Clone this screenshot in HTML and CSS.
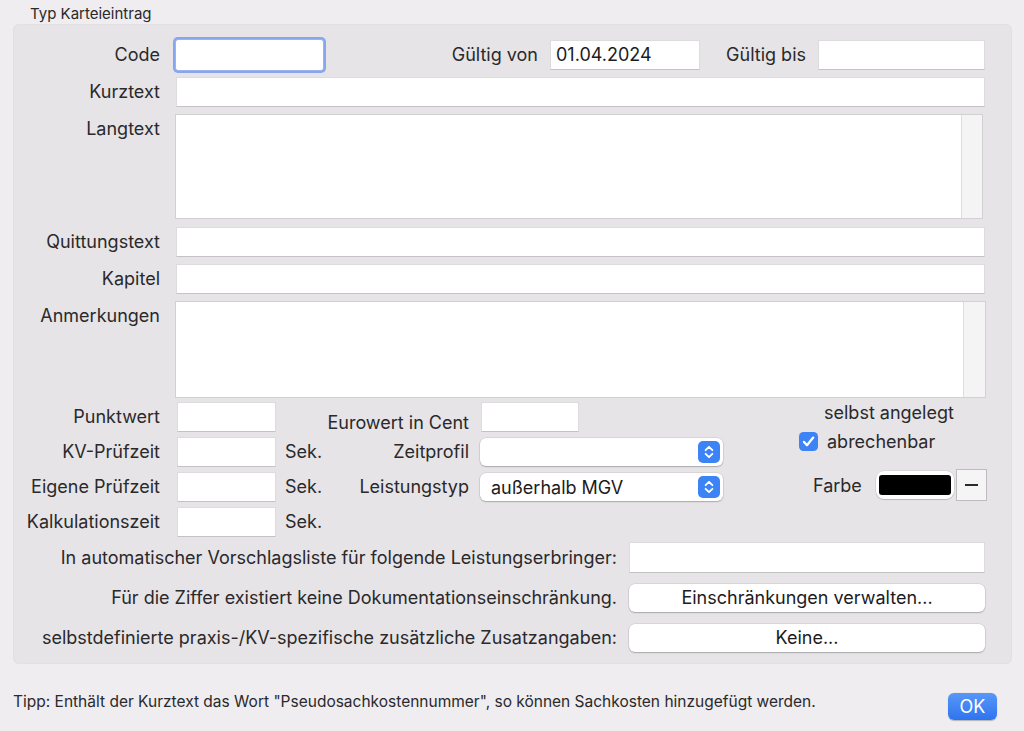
FILE: index.html
```html
<!DOCTYPE html>
<html lang="de">
<head>
<meta charset="utf-8">
<title>Typ Karteieintrag</title>
<link rel="stylesheet" href="styles.css">
</head>
<body>
<div class="window">
  <div class="group-title">Typ Karteieintrag</div>
  <div class="group">
    <div class="row">
      <span class="lbl lbl-main">Code</span>
      <div class="field field-code"></div>
      <span class="lbl lbl-von">Gültig von</span>
      <div class="field field-von">01.04.2024</div>
      <span class="lbl lbl-bis">Gültig bis</span>
      <div class="field grow"></div>
    </div>
    <div class="row">
      <span class="lbl lbl-main">Kurztext</span>
      <div class="field grow"></div>
    </div>
    <div class="row row-lang">
      <span class="lbl lbl-main">Langtext</span>
      <div class="textarea textarea-lang"><div class="ta-body"></div><div class="ta-scroll"></div></div>
    </div>
    <div class="row">
      <span class="lbl lbl-main">Quittungstext</span>
      <div class="field grow"></div>
    </div>
    <div class="row">
      <span class="lbl lbl-main">Kapitel</span>
      <div class="field grow"></div>
    </div>
    <div class="row row-anm">
      <span class="lbl lbl-main">Anmerkungen</span>
      <div class="textarea textarea-anm"><div class="ta-body"></div><div class="ta-scroll"></div></div>
    </div>

    <div class="mid">
      <span class="lbl lbl-main">Punktwert</span>
      <div class="cell"><div class="field field-small"></div></div>
      <span class="lbl lbl-mid lbl-euro">Eurowert in Cent</span>
      <div class="cell"><div class="field field-euro"></div></div>

      <div class="side">
        <div class="selbst">selbst angelegt</div>
        <div class="check-row">
          <svg class="checkbox" viewBox="0 0 19 19" width="19" height="19"><rect width="19" height="19" rx="4.5" fill="#3c83f5"/><path d="M5 9.9l3 3.3 6.2-7.6" stroke="#fff" stroke-width="2.3" fill="none" stroke-linecap="round" stroke-linejoin="round"/></svg>
          <span class="check-label">abrechenbar</span>
        </div>
        <div class="farbe-row">
          <span class="farbe-label">Farbe</span>
          <div class="well"><div class="well-color"></div></div>
          <div class="minus-btn"><span class="minus-line"></span></div>
        </div>
      </div>

      <span class="lbl lbl-main">KV-Prüfzeit</span>
      <div class="cell"><div class="field field-small"></div><span class="unit">Sek.</span></div>
      <span class="lbl lbl-mid">Zeitprofil</span>
      <div class="cell">
        <div class="popup"><span class="popup-text"></span>
          <svg class="stepper" viewBox="0 0 22 22" width="22" height="22"><rect width="22" height="22" rx="5" fill="#3c83f5"/><path d="M7.6 9.2l3.4-3.4 3.4 3.4M7.6 12.8l3.4 3.4 3.4-3.4" stroke="#fff" stroke-width="1.8" fill="none" stroke-linecap="round" stroke-linejoin="round"/></svg>
        </div>
      </div>

      <span class="lbl lbl-main">Eigene Prüfzeit</span>
      <div class="cell"><div class="field field-small"></div><span class="unit">Sek.</span></div>
      <span class="lbl lbl-mid">Leistungstyp</span>
      <div class="cell">
        <div class="popup"><span class="popup-text">außerhalb MGV</span>
          <svg class="stepper" viewBox="0 0 22 22" width="22" height="22"><rect width="22" height="22" rx="5" fill="#3c83f5"/><path d="M7.6 9.2l3.4-3.4 3.4 3.4M7.6 12.8l3.4 3.4 3.4-3.4" stroke="#fff" stroke-width="1.8" fill="none" stroke-linecap="round" stroke-linejoin="round"/></svg>
        </div>
      </div>

      <span class="lbl lbl-main">Kalkulationszeit</span>
      <div class="cell"><div class="field field-small"></div><span class="unit">Sek.</span></div>
    </div>

    <div class="bottom">
      <span class="lbl lbl-bottom">In automatischer Vorschlagsliste für folgende Leistungserbringer:</span>
      <div class="field field-wide"></div>
      <span class="lbl lbl-bottom">Für die Ziffer existiert keine Dokumentationseinschränkung.</span>
      <div class="button">Einschränkungen verwalten...</div>
      <span class="lbl lbl-bottom">selbstdefinierte praxis-/KV-spezifische zusätzliche Zusatzangaben:</span>
      <div class="button">Keine...</div>
    </div>
  </div>
  <div class="footer">
    <span class="tipp">Tipp: Enthält der Kurztext das Wort "Pseudosachkostennummer", so können Sachkosten hinzugefügt werden.</span>
    <div class="ok">OK</div>
  </div>
</div>
</body>
</html>
```

FILE: styles.css
```css
* { box-sizing: border-box; }

html, body {
  margin: 0;
  padding: 0;
}

body {
  background: #efedf0;
  font-family: Inter, "Liberation Sans", Arial, sans-serif;
  color: #2a292b;
  font-size: 18px;
}

.window {
  width: 1024px;
  height: 731px;
  overflow: hidden;
}

.group-title {
  height: 24px;
  padding: 5px 0 0 30px;
  font-size: 15px;
  line-height: 18px;
  color: #2a292b;
}

.group {
  margin-left: 13px;
  width: 999px;
  height: 640px;
  background: #e6e4e7;
  border: 1px solid #e1dfe2;
  border-radius: 6px;
  padding: 15px 26px 10px 0;
}

.row {
  display: flex;
  align-items: flex-start;
  height: 30px;
  margin-bottom: 7px;
}

.row-lang {
  height: 105px;
  margin-bottom: 8px;
}

.row-anm {
  height: 97px;
  margin-bottom: 4px;
}

.lbl {
  display: block;
  line-height: 30px;
  white-space: nowrap;
  text-align: right;
}

.lbl-main {
  width: 163px;
  padding-right: 16px;
  flex: none;
  margin-left: -1px;
}

.lbl-von {
  width: 227px;
  padding-right: 12px;
  flex: none;
}

.lbl-bis {
  width: 118px;
  padding-right: 12px;
  flex: none;
}

.field {
  height: 30px;
  background: #ffffff;
  border: 1px solid #dddbde;
  border-bottom-color: #c4c2c5;
  line-height: 28px;
  padding: 0 5px;
  color: #1c1b1d;
  flex: none;
}

.grow {
  flex: 1;
}

.field-code {
  width: 147px;
  border-color: #ffffff;
  box-shadow: 0 0 0 1px #9bb5ec, 0 0 0 3px #86a6ee;
  border-radius: 2px;
}

.field-von {
  width: 150px;
}

.textarea {
  flex: 1;
  display: flex;
  height: 100%;
  border: 1px solid #d2d0d3;
  background: #ffffff;
}

.textarea-lang {
  margin-right: 2px;
  margin-left: -1px;
}

.textarea-anm {
  margin-right: -1px;
  margin-left: -1px;
}

.ta-body {
  flex: 1;
}

.ta-scroll {
  width: 21px;
  background: #f5f4f5;
  border-left: 1px solid #dedcdf;
}

.textarea-anm .ta-scroll {
  width: 22px;
}

/* middle grid */
.mid {
  display: grid;
  grid-template-columns: 163px 148px 156px 243px 1fr;
  grid-template-rows: repeat(4, 30px);
  row-gap: 5px;
  height: 135px;
  margin-bottom: 5px;
}

.cell {
  display: flex;
  align-items: center;
}

.field-small {
  width: 99px;
}

.field-euro {
  width: 98px;
}

.unit {
  margin-left: 9px;
  line-height: 30px;
}

.lbl-mid {
  padding-right: 12px;
}

.lbl-euro {
  padding-top: 6px;
}

.popup {
  position: relative;
  display: flex;
  align-items: center;
  width: 243px;
  height: 28px;
  margin-left: -1px;
  background: #ffffff;
  border-radius: 6px;
  box-shadow: 0 0 0 0.5px rgba(0, 0, 0, 0.12), 0 1px 1.5px rgba(0, 0, 0, 0.22);
  padding-left: 11px;
}

.popup-text {
  flex: 1;
  color: #1c1b1d;
}

.stepper {
  margin-right: 3px;
  flex: none;
}

.side {
  grid-column: 5;
  grid-row: 1 / span 4;
  display: flex;
  flex-direction: column;
}

.selbst {
  margin-left: 100px;
  line-height: 22px;
  height: 22px;
  white-space: nowrap;
}

.check-row {
  display: flex;
  align-items: center;
  height: 20px;
  margin-top: 7px;
  margin-left: 75px;
}

.checkbox {
  display: block;
  flex: none;
}

.check-label {
  margin-left: 9px;
}

.farbe-row {
  display: flex;
  align-items: center;
  height: 32px;
  margin-top: 18px;
  margin-left: 89px;
}

.farbe-label {
  width: 48px;
  white-space: nowrap;
}

.well {
  margin-left: 15px;
  width: 78px;
  height: 28px;
  background: #ffffff;
  border-radius: 8px;
  padding: 4px 3px;
  box-shadow: 0 0 0 0.5px rgba(0, 0, 0, 0.12), 0 1px 1px rgba(0, 0, 0, 0.15);
}

.well-color {
  width: 100%;
  height: 100%;
  background: #000000;
  border-radius: 3px;
}

.minus-btn {
  margin-left: 2px;
  width: 31px;
  height: 32px;
  background: #f6f5f6;
  border: 1px solid #bebcbf;
  display: flex;
  align-items: center;
  justify-content: center;
}

.minus-line {
  display: block;
  width: 13px;
  height: 1.5px;
  background: #2a292b;
}

/* bottom grid */
.bottom {
  display: grid;
  grid-template-columns: 1fr 356px;
  grid-template-rows: repeat(3, 31px);
  column-gap: 12px;
  row-gap: 9px;
}

.lbl-bottom {
  line-height: 31px;
}

.field-wide {
  height: 31px;
}

.button {
  align-self: center;
  height: 28px;
  background: #ffffff;
  border-radius: 6px;
  box-shadow: 0 0 0 0.5px rgba(0, 0, 0, 0.12), 0 1px 1.5px rgba(0, 0, 0, 0.22);
  text-align: center;
  line-height: 28px;
  color: #1c1b1d;
}

/* footer */
.footer {
  display: flex;
  justify-content: space-between;
  align-items: flex-start;
  padding: 29px 27px 0 13px;
}

.tipp {
  font-size: 15.5px;
  line-height: 18px;
}

.ok {
  width: 49px;
  height: 27px;
  border-radius: 6px;
  background: linear-gradient(#5797f8, #2f74ef);
  color: #ffffff;
  text-align: center;
  line-height: 27px;
  font-size: 18px;
  box-shadow: 0 0.5px 1px rgba(0, 0, 0, 0.25);
}
```
